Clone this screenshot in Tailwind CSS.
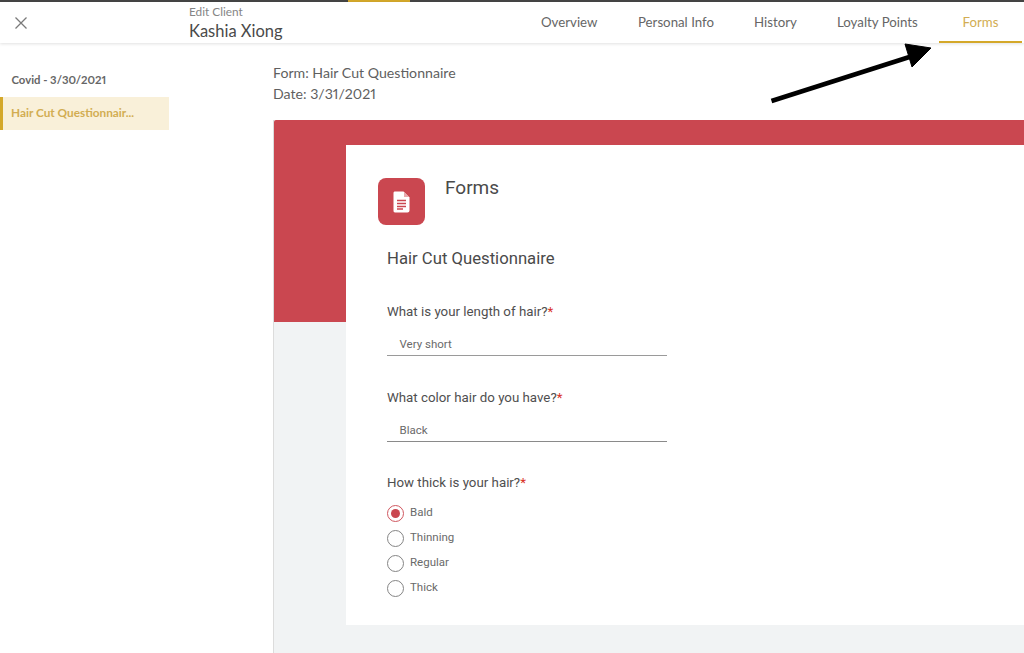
<!DOCTYPE html>
<html>
<head>
<meta charset="utf-8">
<script src="https://cdn.jsdelivr.net/npm/@tailwindcss/browser@4"></script>
</head>
<body class="m-0 bg-white">
<div class="relative w-[1024px] h-[653px] overflow-hidden bg-white flex flex-col font-['Lato',sans-serif]">
  <!-- top strip -->
  <div class="h-[2px] shrink-0 bg-[#454545] pl-[348px]"><div class="w-[62px] h-[2px] bg-[#d4a82a]"></div></div>
  <!-- header -->
  <header class="h-[41px] shrink-0 flex items-stretch shadow-[0_1px_3px_rgba(0,0,0,0.12)] relative bg-white">
    <div class="w-[189px] shrink-0 pl-[14px] pt-[14px]">
      <svg width="14" height="14" viewBox="0 0 14 14" fill="none" stroke="#7a7a7a" stroke-width="1.3"><path d="M1.5 1.5L12.5 12.5M12.5 1.5L1.5 12.5"/></svg>
    </div>
    <div class="w-[352px] shrink-0 pt-[3px]">
      <div class="text-[11.8px] leading-[14px] text-[#858585]">Edit Client</div>
      <div class="text-[16.5px] leading-[20px] mt-[2px] text-[#4a4a4a]">Kashia Xiong</div>
    </div>
    <nav class="flex items-stretch text-[13.25px] text-[#666666]">
      <div class="w-[97px] pt-[12px] leading-[17px]">Overview</div>
      <div class="w-[116px] pt-[12px] leading-[17px]">Personal Info</div>
      <div class="w-[83px] pt-[12px] leading-[17px]">History</div>
      <div class="w-[102px] pt-[12px] leading-[17px]">Loyalty Points</div>
      <div class="w-[83px] pt-[12px] leading-[17px] text-center text-[#d2ad52] border-b-[2px] border-[#d4a82a]">Forms</div>
    </nav>
  </header>
  <!-- body -->
  <div class="flex-1 flex min-h-0">
    <aside class="w-[169px] shrink-0 pt-[29px] text-[11.8px] font-bold">
      <div class="h-[16px] leading-[16px] pl-[11.5px] text-[11.3px] text-[#666666] proportional-nums">Covid - 3/30/2021</div>
      <div class="mt-[9px] h-[33px] leading-[32px] pl-[8px] border-l-[3px] border-[#d4a82a] bg-[#f9f0d9] text-[#d2ad52]">Hair Cut Questionnair...</div>
    </aside>
    <main class="flex-1 pl-[104px] pt-[19px] min-w-0">
      <div class="text-[14.15px] leading-[21px] text-[#5f5f5f] proportional-nums">Form: Hair Cut Questionnaire</div>
      <div class="text-[14.15px] leading-[21px] text-[#5f5f5f] proportional-nums">Date: 3/31/2021</div>
      <!-- form panel -->
      <div class="relative mt-[16px] h-[535px] bg-[#f1f3f4] border-l border-[#dcdcdc] pl-[72px] pt-[25px] font-['Roboto',sans-serif]">
        <div class="absolute left-0 top-0 right-0 h-[202px] bg-[#ca4750] rounded-tl-[2px]"></div>
        <section class="relative bg-white h-[480px] pl-[41px] pt-[33px]">
          <div class="flex items-start -ml-[9px]">
            <div class="w-[47px] h-[47px] rounded-[8px] bg-[#ca4750] flex items-center justify-center">
              <svg width="17" height="22" viewBox="0 0 17 22"><path d="M2 0.5H10.5L16.5 6.5V19.5C16.5 20.6 15.6 21.5 14.5 21.5H2C0.9 21.5 0.5 20.6 0.5 19.5V2C0.5 1 1 0.5 2 0.5Z" fill="#ffffff"/><path d="M11 1L16 6H11Z" fill="#e9a9ad"/><path d="M4 9.5H13M4 12.5H13M4 15.5H13M4 18H10" stroke="#ca4750" stroke-width="1.3"/></svg>
            </div>
            <div class="ml-[20px] text-[19px] leading-[20px] text-[#4a4a4a]">Forms</div>
          </div>
          <h2 class="mt-[24px] text-[16.7px] leading-[20px] font-normal text-[#4a4a4a]">Hair Cut Questionnaire</h2>

          <div class="mt-[35px] text-[13.3px] leading-[16px] text-[#4f4f4f]">What is your length of hair?<span class="text-[#d93025]">*</span></div>
          <div class="mt-[13px] w-[280px] h-[23px] pl-[12.5px] pt-[2px] border-b border-[#9a9a9a] text-[11.5px] leading-[18px] text-[#6a6a6a]">Very short</div>

          <div class="mt-[34px] text-[13.3px] leading-[16px] text-[#4f4f4f]">What color hair do you have?<span class="text-[#d93025]">*</span></div>
          <div class="mt-[13px] w-[280px] h-[23px] pl-[12.5px] pt-[2px] border-b border-[#8a8a8a] text-[11.5px] leading-[18px] text-[#6a6a6a]">Black</div>

          <div class="mt-[33px] text-[13.3px] leading-[16px] text-[#4f4f4f]">How thick is your hair?<span class="text-[#d93025]">*</span></div>
          <div class="mt-[14px] flex flex-col gap-[8px] text-[11.5px] leading-[17px] text-[#6a6a6a]">
            <div class="flex items-center gap-[6px] h-[17px]"><span class="w-[17px] h-[17px] rounded-full border-[1.75px] border-[#d0575f] flex items-center justify-center"><span class="w-[9px] h-[9px] rounded-full bg-[#ca4750]"></span></span><span class="-mt-[2px]">Bald</span></div>
            <div class="flex items-center gap-[6px] h-[17px]"><span class="w-[17px] h-[17px] rounded-full border-[1.75px] border-[#858585]"></span><span class="-mt-[2px]">Thinning</span></div>
            <div class="flex items-center gap-[6px] h-[17px]"><span class="w-[17px] h-[17px] rounded-full border-[1.75px] border-[#858585]"></span><span class="-mt-[2px]">Regular</span></div>
            <div class="flex items-center gap-[6px] h-[17px]"><span class="w-[17px] h-[17px] rounded-full border-[1.75px] border-[#858585]"></span><span class="-mt-[2px]">Thick</span></div>
          </div>
        </section>
      </div>
    </main>
  </div>
  <!-- annotation arrow -->
  <svg class="absolute left-[765px] top-[40px]" width="175" height="66" viewBox="0 0 175 66">
    <path d="M6.5 61L146 16.5" stroke="#000000" stroke-width="4.6" fill="none"/>
    <path d="M140 4L166 8L147 27Z" fill="#000000" stroke="#000000" stroke-width="1"/>
  </svg>
</div>
</body>
</html>
